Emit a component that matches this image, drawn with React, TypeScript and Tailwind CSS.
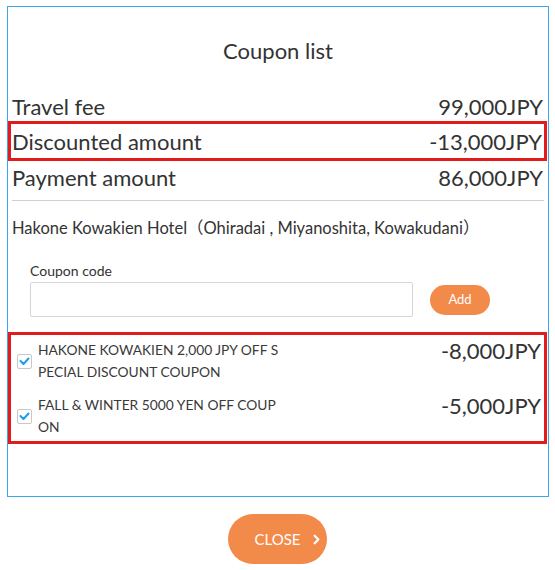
import { ChevronRight } from "lucide-react";

const coupons = [
  { lines: ["HAKONE KOWAKIEN 2,000 JPY OFF S", "PECIAL DISCOUNT COUPON"], amount: "-8,000JPY" },
  { lines: ["FALL & WINTER 5000 YEN OFF COUP", "ON"], amount: "-5,000JPY" },
];

function Check() {
  return (
    <div className="w-[15px] h-[15px] shrink-0 border border-[#c8c8c8] rounded-[2px] bg-white flex items-center justify-center">
      <svg width="11" height="9" viewBox="0 0 11 9" fill="none">
        <polyline points="1.5,4 4.5,7 9.5,1.5" stroke="#1e9cf0" strokeWidth="2" strokeLinecap="round" strokeLinejoin="round" />
      </svg>
    </div>
  );
}

export default function App() {
  return (
    <div className="w-[555px] h-[570px] bg-white text-[#333] font-['Lato','Noto_Sans_CJK_JP',sans-serif]">
      <div className="pt-[6px] pl-[7px]">
        <div className="w-[542px] h-[491px] border border-[#3aa6ec] flex flex-col">
          <div className="pt-[26px] mb-[23px] h-[36px] box-content text-center text-[22px] leading-[36px]">Coupon list</div>

          <div className="flex justify-between items-center h-[29px] pl-[4px] pr-[5px] text-[22px]">
            <span>Travel fee</span>
            <span>99,000JPY</span>
          </div>
          <div className="flex justify-between items-center h-[40px] border-[3px] border-[#e21c1c] pl-[1px] pr-[2px] mr-[1px] text-[22px]">
            <span>Discounted amount</span>
            <span>-13,000JPY</span>
          </div>
          <div className="flex justify-between items-center h-[32px] pl-[4px] pr-[5px] text-[22px]">
            <span>Payment amount</span>
            <span>86,000JPY</span>
          </div>

          <div className="mt-[7px] mx-[4px] border-t border-[#cfcfcf]" />

          <div className="mt-[15px] px-[4px] text-[16.5px] leading-[24px]">
            Hakone Kowakien Hotel（Ohiradai , Miyanoshita, Kowakudani）
          </div>

          <div className="mt-[21px] pl-[22px]">
            <div className="text-[14px] leading-[20px]">Coupon code</div>
            <div className="mt-[1px] flex items-center">
              <input className="w-[383px] h-[35px] border border-[#d6d6d6] rounded-[2px] outline-none px-2" />
              <button className="ml-[17px] w-[60px] h-[30px] rounded-full bg-[#f28a4a] text-white text-[13px]">Add</button>
            </div>
          </div>

          <div className="mt-[15px] mr-[1px] border-[3px] border-[#e21c1c] pt-[4px] pb-[3px] flex flex-col gap-[11px]">
            {coupons.map((c) => (
              <div key={c.amount} className="flex items-start pr-[3px]">
                <div className="pl-[6px] pr-[6px] h-[44px] flex items-center">
                  <Check />
                </div>
                <div className="flex-1 text-[13.8px] leading-[22px] text-[#3a3a3a]">
                  {c.lines.map((l) => (
                    <div key={l}>{l}</div>
                  ))}
                </div>
                <div className="text-[22px] leading-[26px] -mt-[1px]">{c.amount}</div>
              </div>
            ))}
          </div>
        </div>
      </div>

      <div className="mt-[17px] flex justify-center">
        <button className="w-[99px] h-[50px] ml-[-1px] rounded-full bg-[#f28a4a] text-white text-[15px] flex items-center pl-[27px] gap-[8px]">
          <span>CLOSE</span>
          <ChevronRight size={15} strokeWidth={3.5} />
        </button>
      </div>
    </div>
  );
}
